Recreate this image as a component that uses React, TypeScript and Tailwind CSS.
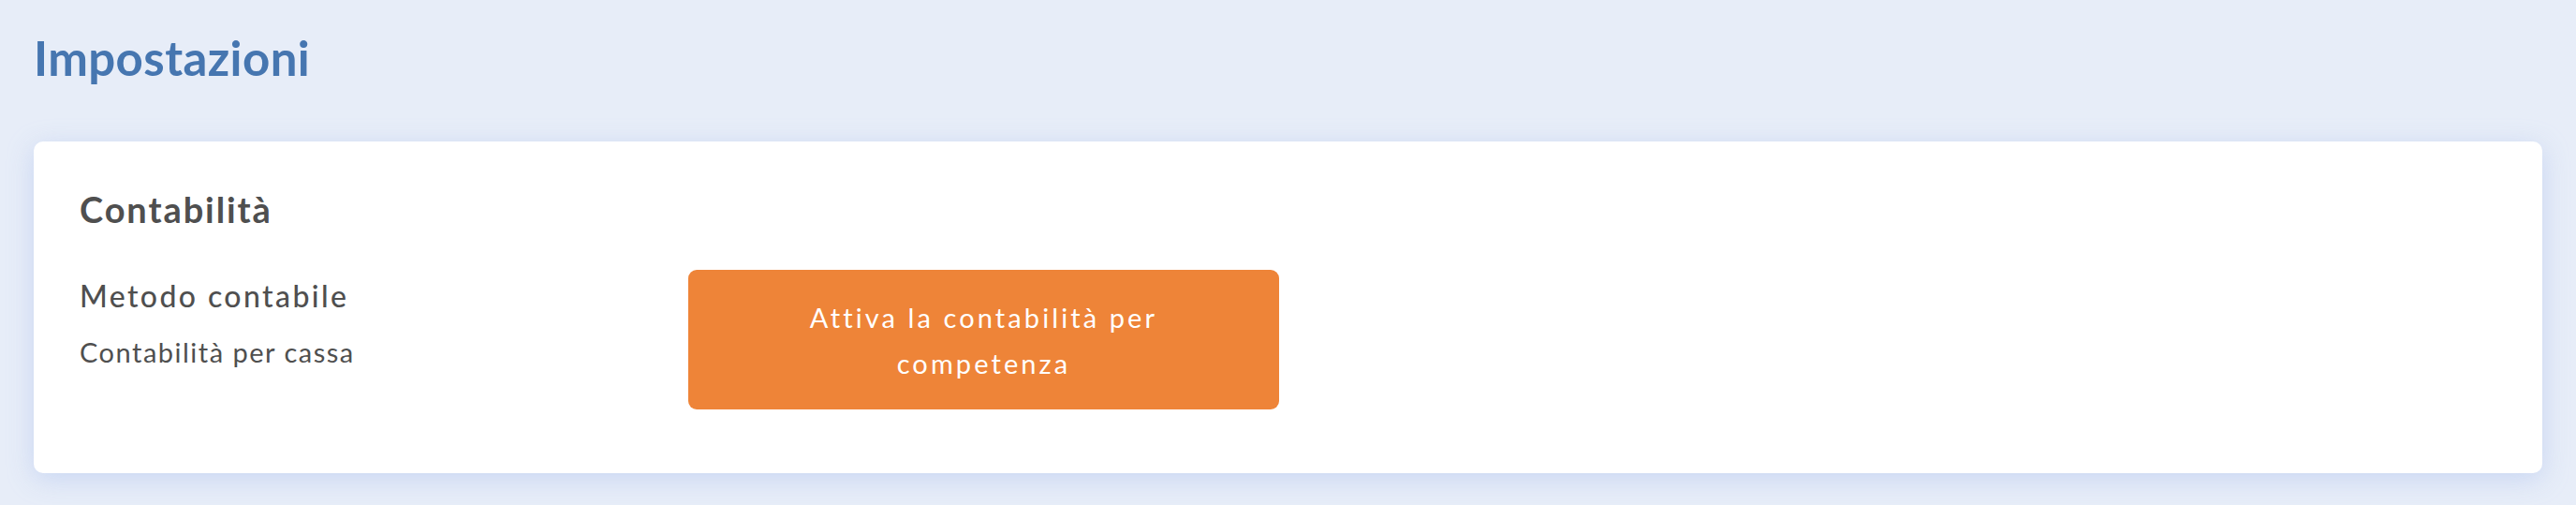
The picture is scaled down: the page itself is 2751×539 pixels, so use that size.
import React from "react";

export default function App() {
  return (
    <div className="min-h-[539px] w-full bg-[#e7edf8] px-[36px] pt-[30px] pb-[34px] font-['Lato','Liberation_Sans',sans-serif]">
      <h1 className="text-[51px] leading-[64px] font-bold text-[#4676b0] tracking-[0.4px]">Impostazioni</h1>
      <div className="mt-[57px] rounded-[10px] bg-white shadow-[0_6px_28px_rgba(190,205,240,0.75)] px-[49px] pt-[48px] pb-[68px]">
        <h2 className="text-[38px] leading-[48px] font-bold text-[#4f4f4f] tracking-[1.9px]">Contabilità</h2>
        <div className="mt-[41px] flex items-start">
          <div className="w-[650px] pt-[8px]">
            <div className="text-[32px] leading-[40px] font-medium text-[#4f4f4f] tracking-[2.4px]">Metodo contabile</div>
            <div className="mt-[22px] text-[29px] leading-[36px] text-[#4f4f4f] tracking-[1.5px]">Contabilità per cassa</div>
          </div>
          <button className="w-[631px] h-[149px] rounded-[9px] bg-[#ee8438] text-white text-[29px] leading-[49px] tracking-[3.1px] px-[40px]">
            Attiva la contabilità per<br />competenza
          </button>
        </div>
      </div>
    </div>
  );
}
